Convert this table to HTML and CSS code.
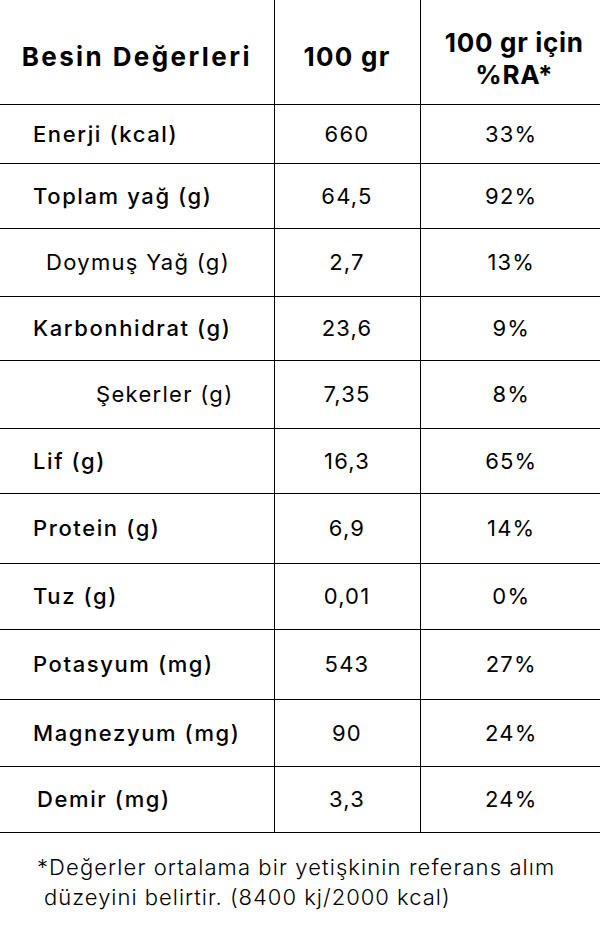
FILE: index.html
```html
<!DOCTYPE html>
<html lang="tr">
<head>
<meta charset="utf-8">
<title>Besin Değerleri</title>
<link rel="stylesheet" href="styles.css">
</head>
<body>
<table class="nutri">
  <colgroup>
    <col class="c1"><col class="c2"><col class="c3">
  </colgroup>
  <thead>
    <tr class="head">
      <th class="h-name">Besin Değerleri</th>
      <th class="h-val">100 gr</th>
      <th class="h-ra">100 gr için<br>%RA*</th>
    </tr>
  </thead>
  <tbody>
    <tr><td class="name">Enerji (kcal)</td><td class="val">660</td><td class="ra">33%</td></tr>
    <tr><td class="name">Toplam yağ (g)</td><td class="val">64,5</td><td class="ra">92%</td></tr>
    <tr><td class="name sub sub-1">Doymuş Yağ (g)</td><td class="val">2,7</td><td class="ra">13%</td></tr>
    <tr><td class="name">Karbonhidrat (g)</td><td class="val">23,6</td><td class="ra">9%</td></tr>
    <tr><td class="name sub sub-2">Şekerler (g)</td><td class="val">7,35</td><td class="ra">8%</td></tr>
    <tr><td class="name">Lif (g)</td><td class="val">16,3</td><td class="ra">65%</td></tr>
    <tr><td class="name">Protein (g)</td><td class="val">6,9</td><td class="ra">14%</td></tr>
    <tr><td class="name">Tuz (g)</td><td class="val">0,01</td><td class="ra">0%</td></tr>
    <tr><td class="name">Potasyum (mg)</td><td class="val">543</td><td class="ra">27%</td></tr>
    <tr><td class="name">Magnezyum (mg)</td><td class="val">90</td><td class="ra">24%</td></tr>
    <tr><td class="name name-demir">Demir (mg)</td><td class="val">3,3</td><td class="ra">24%</td></tr>
  </tbody>
</table>
<p class="note">
  <span class="note-line">*Değerler ortalama bir yetişkinin referans alım</span>
  <span class="note-line note-line-2">düzeyini belirtir. (8400 kj/2000 kcal)</span>
</p>
</body>
</html>
```
FILE: styles.css
```css
html, body {
  margin: 0;
  padding: 0;
  background: #ffffff;
}

body {
  font-family: Inter, "Noto Sans", "DejaVu Sans", sans-serif;
  color: #000000;
  width: 600px;
}

.nutri {
  width: 600px;
  border-collapse: collapse;
  table-layout: fixed;
}

.c1 { width: 274px; }
.c2 { width: 146px; }
.c3 { width: 180px; }

.nutri th,
.nutri td {
  border: 1px solid #000000;
  padding: 0;
  vertical-align: middle;
}

.nutri th:first-child,
.nutri td:first-child { border-left: none; }
.nutri th:last-child,
.nutri td:last-child { border-right: none; }
.nutri thead th { border-top: none; }

.head { height: 104px; }

.nutri th {
  font-weight: 700;
  font-size: 26px;
  text-align: center;
  line-height: 32px;
  padding-top: 10px;
}

.nutri .h-name { letter-spacing: 2.4px; }
.nutri .h-val { letter-spacing: 1.3px; }
.nutri .h-ra { letter-spacing: 0.7px; padding-left: 8px; padding-top: 15px; }

.nutri tbody tr:nth-child(1) { height: 59px; }
.nutri tbody tr:nth-child(2) { height: 65px; }
.nutri tbody tr:nth-child(3) { height: 68px; }
.nutri tbody tr:nth-child(4) { height: 64px; }
.nutri tbody tr:nth-child(5) { height: 68px; }
.nutri tbody tr:nth-child(6) { height: 65px; }
.nutri tbody tr:nth-child(7) { height: 70px; }
.nutri tbody tr:nth-child(8) { height: 66px; }
.nutri tbody tr:nth-child(9) { height: 70px; }
.nutri tbody tr:nth-child(10) { height: 67px; }
.nutri tbody tr:nth-child(11) { height: 66px; }

.nutri td {
  font-size: 22px;
  line-height: 26px;
}

.nutri .name {
  font-weight: 500;
  letter-spacing: 1.6px;
  padding-left: 33px;
  text-align: left;
}

.nutri .sub { font-weight: 400; letter-spacing: 1.3px; }
.nutri .sub-1 { padding-left: 46px; }
.nutri .sub-2 { padding-left: 96px; }
.nutri .name-demir { padding-left: 37px; }

.nutri .val,
.nutri .ra {
  font-weight: 400;
  letter-spacing: 1.2px;
  text-align: center;
}

.nutri .ra { padding-left: 2px; }

.note {
  margin: 19px 0 0 0;
  padding-left: 37px;
  font-size: 22px;
  font-weight: 300;
  line-height: 30px;
  letter-spacing: 1.1px;
}

.note-line { display: block; }
.note-line-2 { padding-left: 7px; letter-spacing: 1px; }
```
